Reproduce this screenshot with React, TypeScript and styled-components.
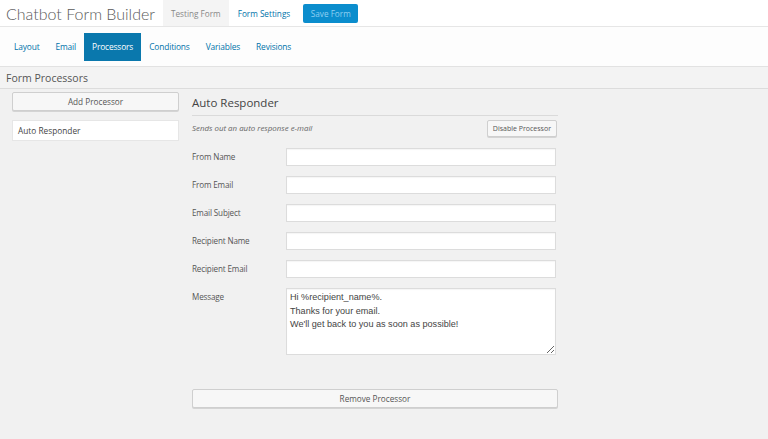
import React from "react";
import styled, { createGlobalStyle } from "styled-components";

const Global = createGlobalStyle`
  html, body { margin: 0; padding: 0; background: #f1f1f1; }
  body { font-family: "Open Sans", "Noto Sans", sans-serif; color: #444; }
  * { box-sizing: border-box; }
`;

const Page = styled.div`
  width: 768px;
  height: 439px;
  background: #f1f1f1;
  overflow: hidden;
`;

const TopBar = styled.header`
  height: 27px;
  background: #fff;
  border-bottom: 1px solid #e6e6e6;
  display: flex;
  align-items: stretch;
`;

const Title = styled.h1`
  margin: 0;
  padding: 0 0 0 6px;
  width: 163px;
  font-family: Lato, "Open Sans", sans-serif;
  font-size: 16px;
  font-weight: 300;
  color: #5a5a5a;
  display: flex;
  align-items: center;
  white-space: nowrap;
`;

const TopTab = styled.a<{ $current?: boolean }>`
  display: flex;
  align-items: center;
  padding: 0 ${(p) => (p.$current ? "8px" : "9px")};
  font-size: 8.2px;
  color: ${(p) => (p.$current ? "#888" : "#0073aa")};
  background: ${(p) => (p.$current ? "#f4f4f4" : "transparent")};
  text-decoration: none;
`;

const SaveButton = styled.button`
  align-self: center;
  margin-left: 4px;
  height: 19px;
  width: 55px;
  padding: 0;
  border: none;
  border-radius: 2px;
  background: #0b8dcd;
  color: #8fd0f2;
  font-family: inherit;
  font-size: 8.2px;
`;

const NavBar = styled.nav`
  height: 40px;
  background: #fdfdfd;
  border-bottom: 1px solid #e2e2e2;
  display: flex;
  align-items: center;
  padding-left: 6px;
`;

const NavTab = styled.a<{ $active?: boolean }>`
  height: 28px;
  display: flex;
  align-items: center;
  padding: 0 8px;
  font-size: 8.4px;
  letter-spacing: -0.15px;
  text-decoration: none;
  color: ${(p) => (p.$active ? "#fff" : "#0073aa")};
  background: ${(p) => (p.$active ? "#0a78ad" : "transparent")};
`;

const SectionHeader = styled.div`
  height: 22px;
  border-bottom: 1px solid #dcdcdc;
  display: flex;
  align-items: center;
  padding-left: 6px;
  font-size: 10.5px;
  color: #555;
  background: #f3f3f3;
`;

const Body = styled.div`
  display: flex;
  padding: 3px 0 0 12px;
`;

const Sidebar = styled.aside`
  width: 167px;
  display: flex;
  flex-direction: column;
  gap: 9px;
`;

const Button = styled.button<{ $small?: boolean }>`
  height: ${(p) => (p.$small ? "17px" : "19px")};
  padding: 0 ${(p) => (p.$small ? "5px" : "0")};
  background: #f7f7f7;
  border: 1px solid #cfcfcf;
  border-radius: 2px;
  box-shadow: 0 1px 0 #d4d4d4;
  font-family: inherit;
  font-size: ${(p) => (p.$small ? "7px" : "8.2px")};
  color: #555;
`;

const ProcessorItem = styled.div`
  height: 21px;
  background: #fff;
  border: 1px solid #e6e6e6;
  display: flex;
  align-items: center;
  padding-left: 5px;
  font-size: 8.3px;
  color: #444;
`;

const Main = styled.main`
  margin-left: 13px;
  width: 366px;
  display: flex;
  flex-direction: column;
`;

const Heading = styled.h2`
  margin: 0;
  height: 24px;
  padding-bottom: 3px;
  border-bottom: 1px solid #dadada;
  font-size: 11.5px;
  font-weight: 400;
  color: #444;
  display: flex;
  align-items: center;
`;

const DescRow = styled.div`
  display: flex;
  align-items: center;
  justify-content: space-between;
  height: 24px;
  padding-right: 1px;
  margin-bottom: 8px;
`;

const Desc = styled.em`
  font-size: 7.9px;
  color: #666;
`;

const FieldRow = styled.div<{ $top?: boolean }>`
  display: flex;
  align-items: ${(p) => (p.$top ? "flex-start" : "center")};
  margin-bottom: 10px;
`;

const Label = styled.label`
  width: 94px;
  font-size: 8.1px;
  letter-spacing: -0.15px;
  color: #555;
  line-height: 18px;
`;

const Input = styled.input`
  width: 270px;
  height: 18px;
  border: 1px solid #dcdcdc;
  box-shadow: inset 0 1px 1px rgba(0, 0, 0, 0.04);
  background: #fff;
  padding: 0 4px;
  font-size: 9px;
`;

const TextArea = styled.textarea`
  width: 270px;
  height: 67px;
  border: 1px solid #dcdcdc;
  box-shadow: inset 0 1px 1px rgba(0, 0, 0, 0.04);
  background: #fff;
  padding: 2px 3px;
  font-family: "Liberation Sans", Arial, sans-serif;
  font-size: 9.1px;
  line-height: 13.5px;
  color: #444;
  resize: vertical;
`;

const RemoveButton = styled(Button)`
  margin-top: 24px;
  width: 366px;
`;

const fields = ["From Name", "From Email", "Email Subject", "Recipient Name", "Recipient Email"];

export default function App() {
  return (
    <Page>
      <Global />
      <TopBar>
        <Title>Chatbot Form Builder</Title>
        <TopTab $current>Testing Form</TopTab>
        <TopTab>Form Settings</TopTab>
        <SaveButton>Save Form</SaveButton>
      </TopBar>
      <NavBar>
        <NavTab>Layout</NavTab>
        <NavTab>Email</NavTab>
        <NavTab $active>Processors</NavTab>
        <NavTab>Conditions</NavTab>
        <NavTab>Variables</NavTab>
        <NavTab>Revisions</NavTab>
      </NavBar>
      <SectionHeader>Form Processors</SectionHeader>
      <Body>
        <Sidebar>
          <Button>Add Processor</Button>
          <ProcessorItem>Auto Responder</ProcessorItem>
        </Sidebar>
        <Main>
          <Heading>Auto Responder</Heading>
          <DescRow>
            <Desc>Sends out an auto response e-mail</Desc>
            <Button $small>Disable Processor</Button>
          </DescRow>
          {fields.map((f) => (
            <FieldRow key={f}>
              <Label>{f}</Label>
              <Input />
            </FieldRow>
          ))}
          <FieldRow $top>
            <Label>Message</Label>
            <TextArea
              defaultValue={"Hi %recipient_name%.\nThanks for your email.\nWe'll get back to you as soon as possible!"}
            />
          </FieldRow>
          <RemoveButton>Remove Processor</RemoveButton>
        </Main>
      </Body>
    </Page>
  );
}
